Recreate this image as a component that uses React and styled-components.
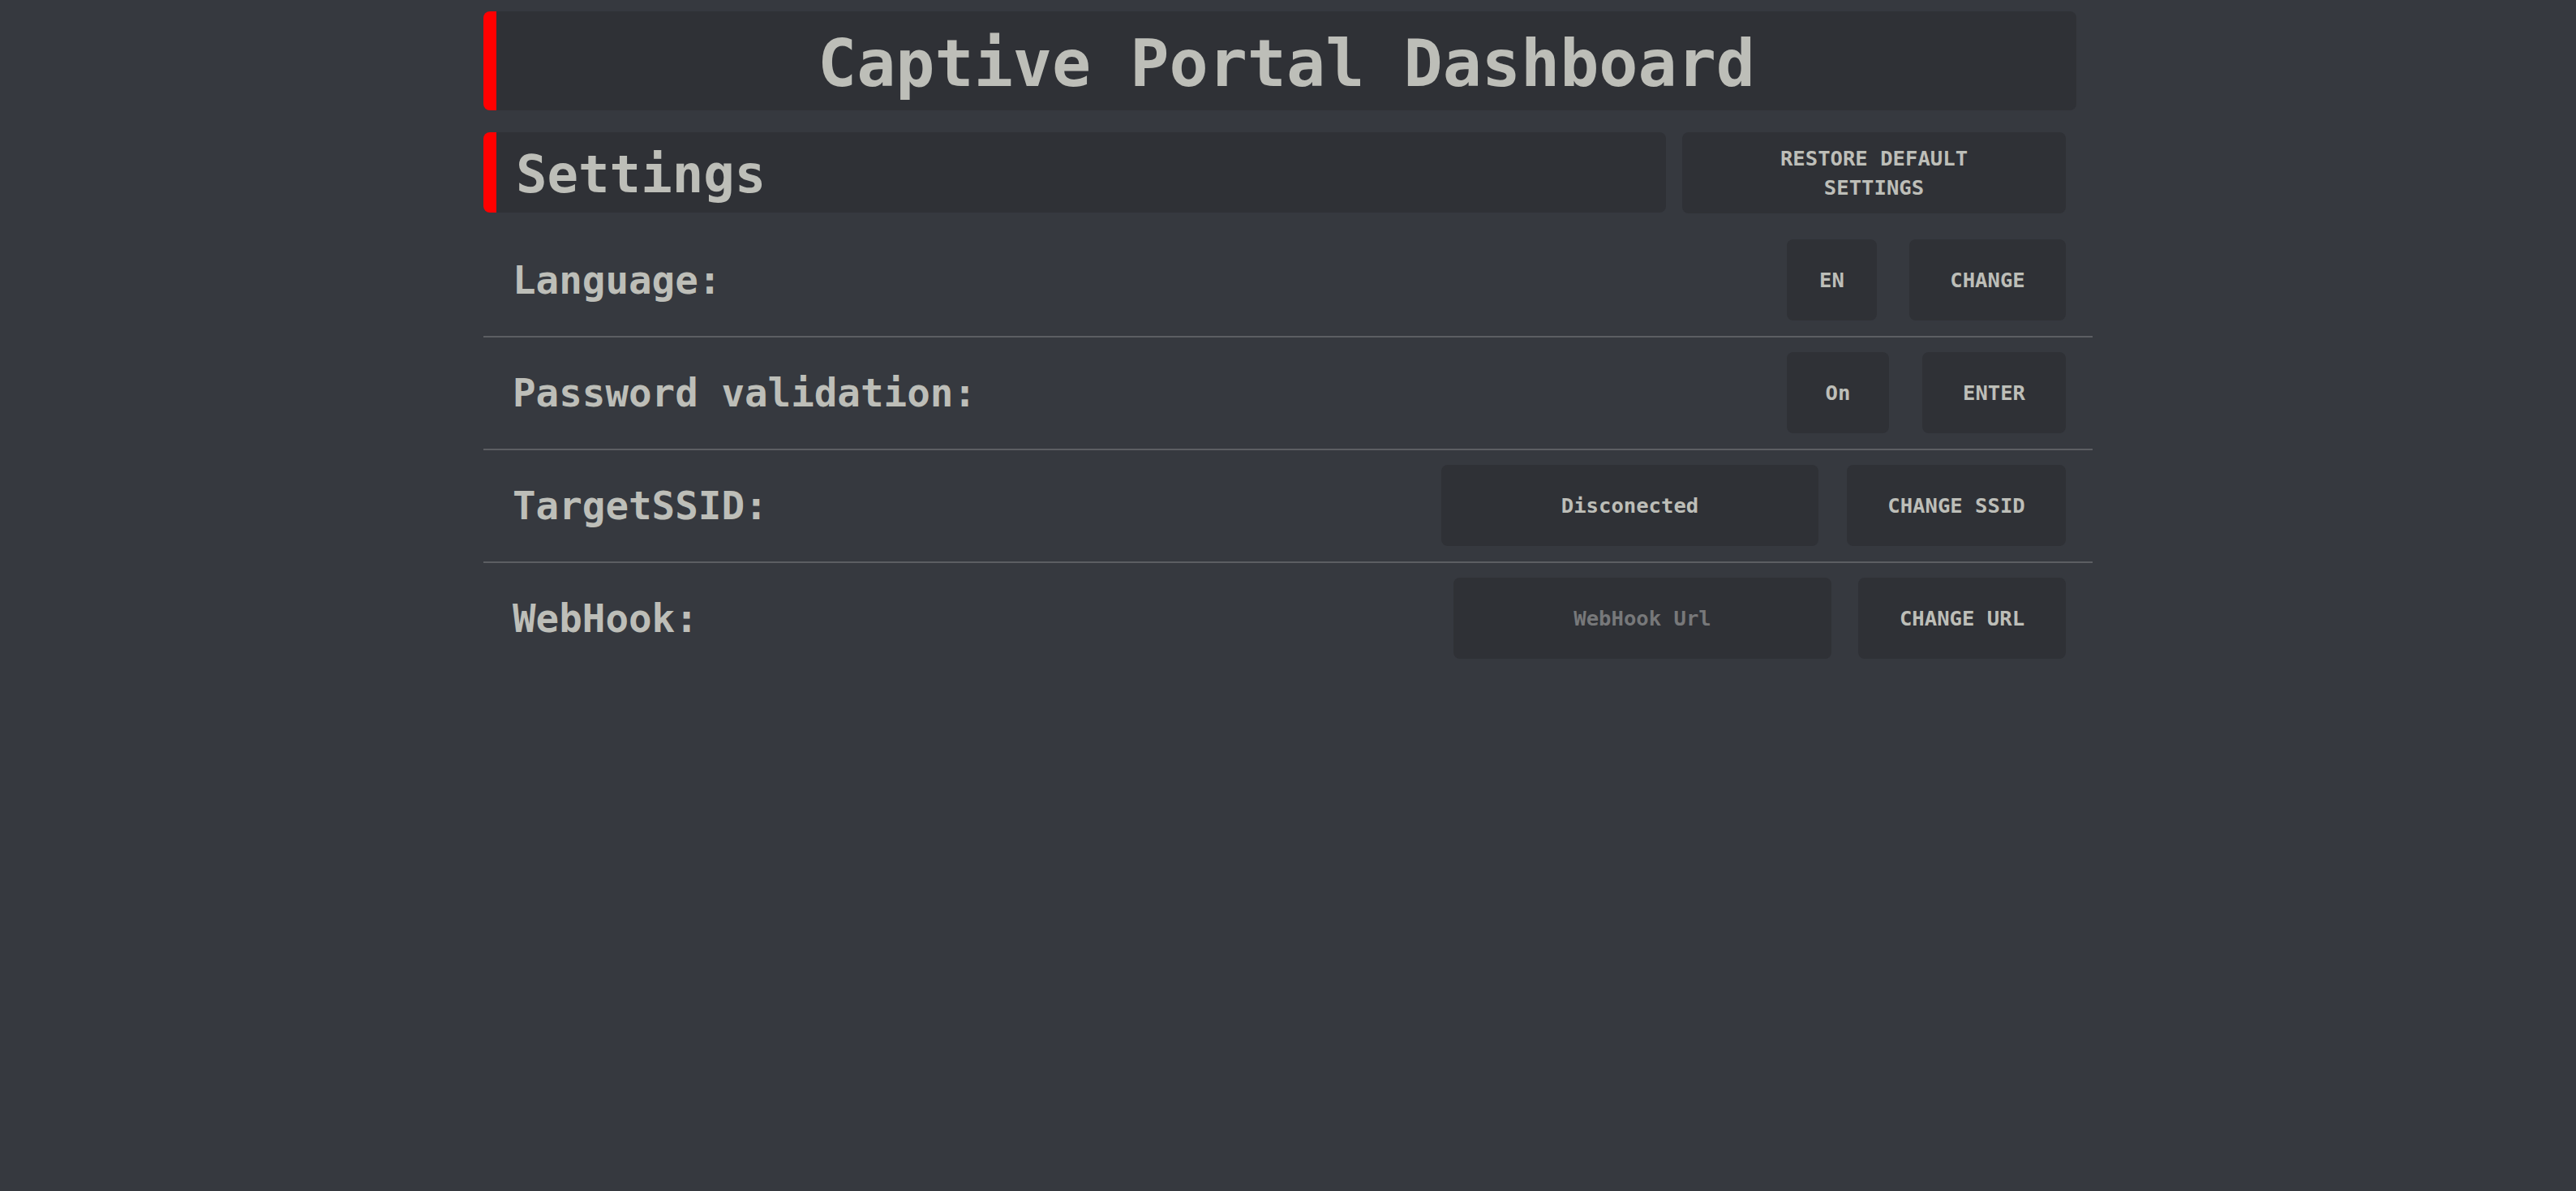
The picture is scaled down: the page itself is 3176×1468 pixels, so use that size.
import React from "react"
import styled, { createGlobalStyle } from "styled-components"

const GlobalStyle = createGlobalStyle`
  html, body {
    margin: 0;
    padding: 0;
    background: #36393f;
  }
  body {
    font-family: "DejaVu Sans Mono", "Liberation Mono", monospace;
    color: #bdbeb8;
  }
`

const Page = styled.main`
  width: 1984px;
  margin: 0 auto;
  padding-top: 14px;
`

const Header = styled.header`
  display: flex;
  align-items: center;
  justify-content: center;
  height: 122px;
  margin-right: 20px;
  box-sizing: border-box;
  background: #2f3136;
  border-left: 16px solid #ff0000;
  border-radius: 8px;
  h1 {
    margin: 0;
    padding-top: 8px;
    font-size: 80px;
    font-weight: 700;
    line-height: 1;
  }
`

const SettingsBar = styled.section`
  display: flex;
  gap: 20px;
  margin-top: 27px;
  margin-right: 33px;
  margin-bottom: 14px;
`

const SectionTitle = styled.div`
  flex: 1;
  display: flex;
  align-items: center;
  height: 99px;
  box-sizing: border-box;
  padding-left: 24px;
  background: #2f3136;
  border-left: 16px solid #ff0000;
  border-radius: 8px;
  h2 {
    margin: 0;
    padding-top: 4px;
    font-size: 64px;
    font-weight: 700;
  }
`

const Button = styled.button`
  display: flex;
  align-items: center;
  justify-content: center;
  flex-shrink: 0;
  width: ${(p) => p.$width}px;
  height: 100px;
  padding: 0;
  border: none;
  border-radius: 8px;
  background: #2f3136;
  color: #bdbeb8;
  font-family: inherit;
  font-size: 25.6px;
  font-weight: 700;
  line-height: 36px;
  text-align: center;
  cursor: pointer;
`

const Row = styled.div`
  display: flex;
  align-items: center;
  justify-content: space-between;
  padding: 18px 33px 19px 36px;
  border-bottom: ${(p) => (p.$last ? "none" : "2px solid #5c5e62")};
`

const Label = styled.span`
  font-size: 47.5px;
  font-weight: 700;
`

const Controls = styled.div`
  display: flex;
  align-items: center;
  gap: ${(p) => p.$gap}px;
`

const Status = styled.div`
  display: flex;
  align-items: center;
  justify-content: center;
  width: ${(p) => p.$width}px;
  height: 100px;
  border-radius: 8px;
  background: #2f3136;
  font-size: 25.6px;
  font-weight: 700;
`

const Input = styled.input`
  width: ${(p) => p.$width}px;
  height: 100px;
  box-sizing: border-box;
  border: none;
  border-radius: 8px;
  outline: none;
  background: #2f3136;
  color: #bdbeb8;
  font-family: inherit;
  font-size: 25.6px;
  font-weight: 700;
  text-align: center;
  &::placeholder {
    color: #77787a;
  }
`

const App = () => {
  return (
    <>
      <GlobalStyle />
      <Page>
        <Header>
          <h1>Captive Portal Dashboard</h1>
        </Header>
        <SettingsBar>
          <SectionTitle>
            <h2>Settings</h2>
          </SectionTitle>
          <Button $width={473}>
            RESTORE DEFAULT
            <br />
            SETTINGS
          </Button>
        </SettingsBar>

        <Row>
          <Label>Language:</Label>
          <Controls $gap={40}>
            <Button $width={111}>EN</Button>
            <Button $width={193}>CHANGE</Button>
          </Controls>
        </Row>
        <Row>
          <Label>Password validation:</Label>
          <Controls $gap={41}>
            <Button $width={126}>On</Button>
            <Button $width={177}>ENTER</Button>
          </Controls>
        </Row>
        <Row>
          <Label>TargetSSID:</Label>
          <Controls $gap={35}>
            <Status $width={465}>Disconected</Status>
            <Button $width={270}>CHANGE SSID</Button>
          </Controls>
        </Row>
        <Row $last>
          <Label>WebHook:</Label>
          <Controls $gap={33}>
            <Input $width={466} placeholder="WebHook Url" />
            <Button $width={256}>CHANGE URL</Button>
          </Controls>
        </Row>
      </Page>
    </>
  )
}

export default App
